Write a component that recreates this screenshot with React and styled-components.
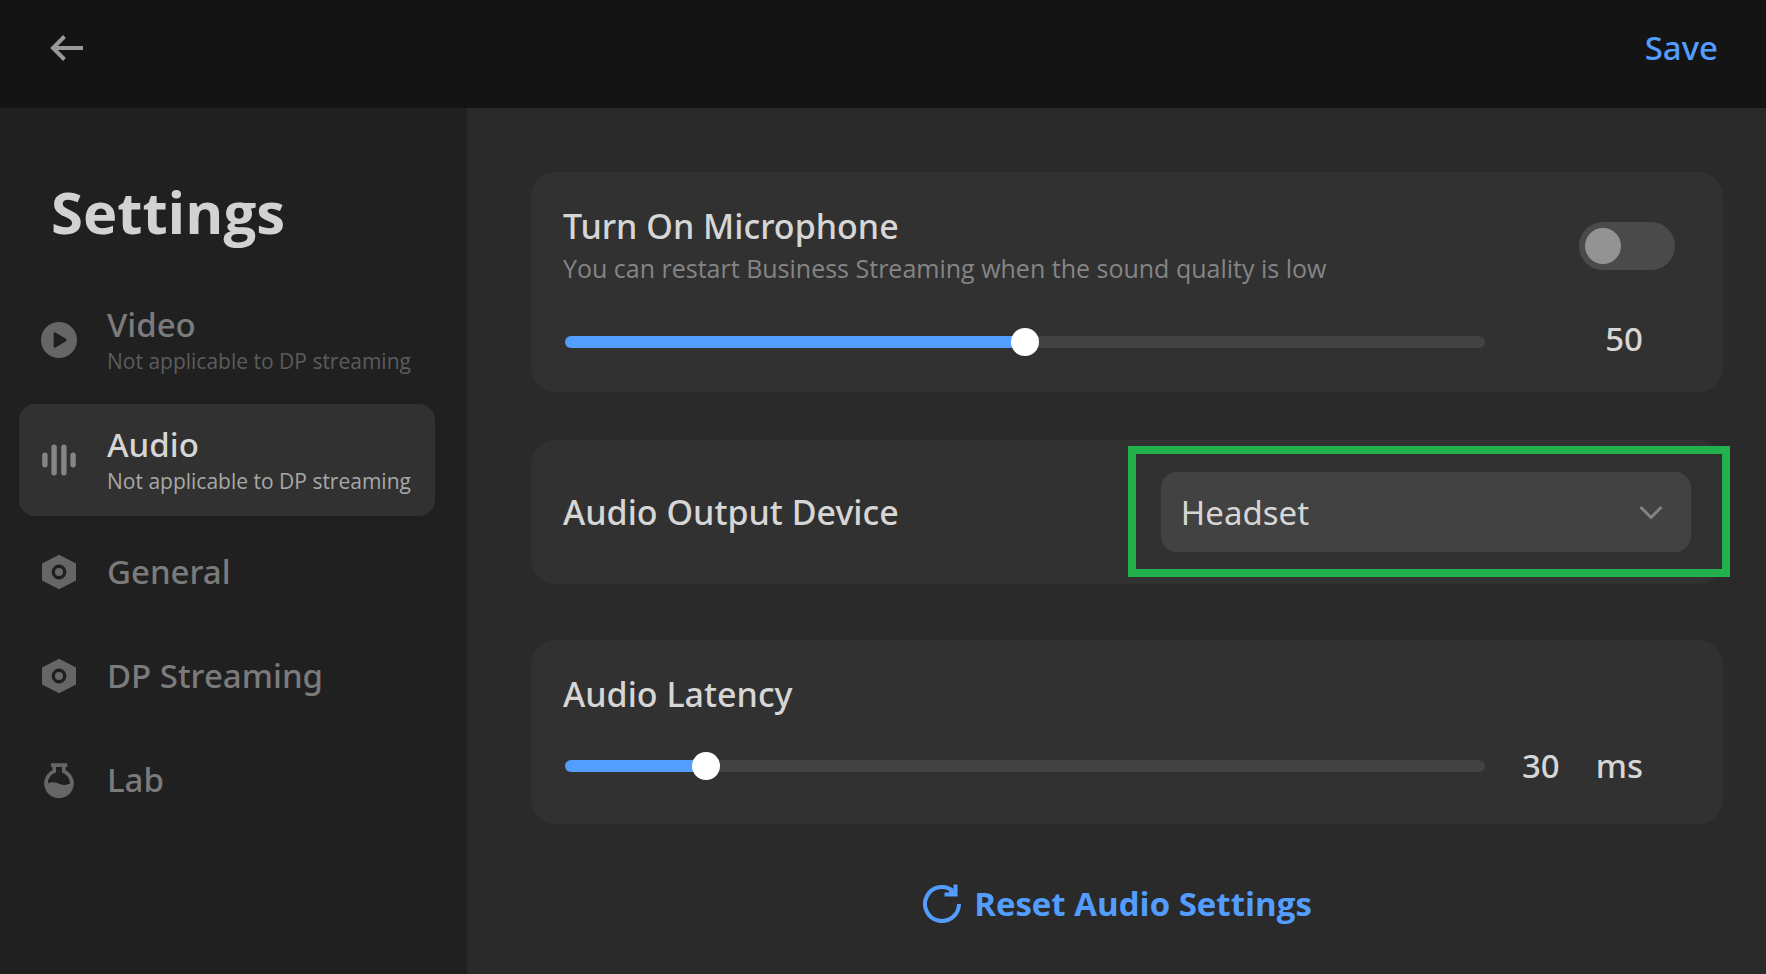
import {useState} from "react";
import styled, {createGlobalStyle} from "styled-components";

const GlobalStyle = createGlobalStyle`
  * {
    box-sizing: border-box;
  }

  body {
    margin: 0;
    background: #2a2a2a;
    color: #d6d6d6;
    font-family: "Noto Sans", "Open Sans", sans-serif;
    font-size: 33px;
    font-weight: 400;
  }

  button, input, select {
    margin: 0;
    font: inherit;
    color: inherit;
  }

  h1, h2, p {
    margin: 0;
  }
`;

const StyledApp = styled.div`
  min-height: 100vh;
  display: flex;
  flex-direction: column;
`;

const TopBar = styled.header`
  height: 108px;
  padding: 0 48px 12px;
  display: flex;
  align-items: center;
  justify-content: space-between;
  background: #141414;
`;

const TextButton = styled.button`
  display: flex;
  align-items: center;
  gap: 12px;
  padding: 0;
  border: 0;
  background: none;
  color: #539dff;
  font-weight: 500;
  line-height: 40px;
  cursor: pointer;
`;

const BackButton = styled(TextButton)`
  color: #999999;
`;

const ResetButton = styled(TextButton)`
  font-family: "Open Sans", "Noto Sans", sans-serif;
  font-weight: 700;
`;

const Body = styled.div`
  flex: 1;
  display: flex;
`;

const Sidebar = styled.aside`
  width: 467px;
  flex-shrink: 0;
  padding: 64px 32px 32px 19px;
  background: #202020;
`;

const Heading = styled.h1`
  padding-left: 32px;
  margin-bottom: 32px;
  color: #d2d2d2;
  font-family: "Open Sans", "Noto Sans", sans-serif;
  font-size: 58px;
  font-weight: 700;
  line-height: 80px;
`;

const Menu = styled.nav`
  display: flex;
  flex-direction: column;
  gap: 8px;
`;

const MenuItem = styled.button`
  height: ${props => props.$tall ? 112 : 96}px;
  padding: 0 20px;
  display: flex;
  align-items: center;
  gap: 28px;
  border: 0;
  border-radius: 16px;
  text-align: left;
  cursor: pointer;
  background: ${props => props.$active ? "#313131" : "transparent"};
  color: ${props => props.$active ? "#d6d6d6" : "#7b7b7b"};

  & svg {
    flex-shrink: 0;
    color: ${props => props.$active ? "#858585" : "#666666"};
  }
`;

const MenuText = styled.span`
  display: flex;
  flex-direction: column;
  gap: 2px;
  font-weight: 500;
  line-height: 40px;
  white-space: nowrap;
`;

const MenuNote = styled.span`
  color: ${props => props.$active ? "#a8a8a8" : "#5c5c5c"};
  font-family: "Open Sans", "Noto Sans", sans-serif;
  font-size: 21px;
  font-weight: 400;
  line-height: 28px;
`;

const Main = styled.main`
  flex: 1;
  min-width: 0;
  padding: 64px 43px 32px 64px;
  display: flex;
  flex-direction: column;
`;

const Card = styled.section`
  padding: 32px;
  border-radius: 24px;
  background: #313131;
`;

const MicCard = styled(Card)`
  padding-top: 34px;
  margin-bottom: 48px;
`;

const DeviceCard = styled(Card)`
  margin-bottom: 56px;
  display: flex;
  align-items: center;
  justify-content: space-between;
`;

const LatencyCard = styled(Card)`
  padding-top: 34px;
  padding-bottom: 40px;
`;

const CardTop = styled.div`
  display: flex;
  align-items: center;
  justify-content: space-between;
  padding-right: 16px;
  margin-bottom: 38px;
`;

const CardTitle = styled.h2`
  font-size: 34px;
  font-weight: 500;
  line-height: 40px;
`;

const CardNote = styled.p`
  margin-top: 4px;
  color: #858585;
  font-family: "Open Sans", "Noto Sans", sans-serif;
  font-size: 25px;
  line-height: 36px;
`;

const Switch = styled.input`
  appearance: none;
  width: 96px;
  height: 48px;
  padding: 6px;
  flex-shrink: 0;
  display: flex;
  justify-content: ${props => props.checked ? "flex-end" : "flex-start"};
  border-radius: 24px;
  background: ${props => props.checked ? "#539dff" : "#4a4a4a"};
  cursor: pointer;

  &::before {
    content: "";
    width: 36px;
    height: 36px;
    border-radius: 50%;
    background: ${props => props.checked ? "#ffffff" : "#939393"};
  }
`;

const SliderRow = styled.div`
  height: 36px;
  padding: 0 48px 0 2px;
  display: flex;
  align-items: center;
`;

const LatencyRow = styled(SliderRow)`
  margin-top: 34px;
`;

const StyledSlider = styled.input`
  --stop: calc(14px + (100% - 28px) * var(--ratio));
  appearance: none;
  flex: 1;
  min-width: 0;
  height: 28px;
  background: transparent;
  cursor: pointer;

  &::-webkit-slider-runnable-track {
    height: 12px;
    border-radius: 6px;
    background: linear-gradient(to right, #539dff var(--stop), #424242 var(--stop));
  }

  &::-webkit-slider-thumb {
    appearance: none;
    width: 28px;
    height: 28px;
    margin-top: -8px;
    border-radius: 50%;
    background: #ffffff;
  }
`;

const SliderValue = styled.output`
  width: 158px;
  display: flex;
  justify-content: flex-end;
  gap: 36px;
  padding-bottom: ${props => props.$raised ? 6 : 0}px;
  font-weight: 500;
  line-height: 36px;
`;

const SelectField = styled.div`
  position: relative;
  width: 47%;

  & svg {
    position: absolute;
    top: 28px;
    right: 28px;
    pointer-events: none;
    color: #828282;
  }
`;

const StyledSelect = styled.select`
  appearance: none;
  display: block;
  width: 100%;
  height: 80px;
  padding: 0 64px 0 20px;
  border: 0;
  border-radius: 16px;
  background: #424242;
  cursor: pointer;
`;

// frame drawn over the card, its right side goes past the card edge
const Highlight = styled.div`
  position: absolute;
  inset: -26px -39px -25px -33px;
  border: 8px solid #22b14c;
  pointer-events: none;
`;

const Footer = styled.footer`
  padding: 60px 20px 0 0;
  display: flex;
  justify-content: center;
`;

const BackIcon = () => (
    <svg width="36" height="36" viewBox="0 0 36 36" fill="none" stroke="currentColor" strokeWidth="4">
        <path d="M35 18H6M16.5 6.5L5 18L16.5 29.5"/>
    </svg>
);

const VideoIcon = () => (
    <svg width="40" height="40" viewBox="0 0 40 40" fill="currentColor">
        <path fillRule="evenodd" d="M20 2a18 18 0 1 0 0 36a18 18 0 1 0 0-36zM16.5 12.4L27 18.8Q28.6 20 27 21.2L16.5 27.6Q14.6 28.4 14.6 26.4V13.6Q14.6 11.6 16.5 12.4z"/>
    </svg>
);

const AudioIcon = () => (
    <svg width="40" height="40" viewBox="0 0 40 40" fill="currentColor">
        <rect x="3.2" y="12.6" width="5.4" height="14.8" rx="2.7"/>
        <rect x="12.4" y="4.6" width="5.4" height="30.8" rx="2.7"/>
        <rect x="22.2" y="4.6" width="5.4" height="30.8" rx="2.7"/>
        <rect x="31.4" y="12.6" width="5.4" height="14.8" rx="2.7"/>
    </svg>
);

const NutIcon = () => (
    <svg width="40" height="40" viewBox="0 0 40 40" fill="currentColor">
        <path fillRule="evenodd" d="M20 2.8L37 11.4V28.6L20 37.2L3 28.6V11.4zM20 12.6a7.4 7.4 0 1 0 0 14.8a7.4 7.4 0 1 0 0-14.8z"/>
        <circle cx="20" cy="20" r="4"/>
    </svg>
);

const LabIcon = () => (
    <svg width="40" height="40" viewBox="0 0 40 40" fill="currentColor">
        <path fillRule="evenodd" d="M12 3.2H28.2V7H26.6V10.2A14.8 14.8 0 1 1 13.4 10.2V7H12zM17 7V12.4A11.6 11.6 0 0 0 8.9 23.2C14 21.4 17.2 22.6 20.4 23.9C24 25.3 28 25.2 31 23.6A11.6 11.6 0 0 0 23 12.4V7z"/>
    </svg>
);

const ChevronIcon = () => (
    <svg width="24" height="24" viewBox="0 0 24 24" fill="none" stroke="currentColor" strokeWidth="3">
        <path d="M1.5 7L12 17.5L22.5 7"/>
    </svg>
);

const ResetIcon = () => (
    <svg width="40" height="40" viewBox="0 0 40 40" fill="none" stroke="currentColor" strokeWidth="4">
        <path d="M37 20A17 17 0 1 1 31 7"/>
        <path d="M33.5 0.5V10.5H22.5"/>
        <path d="M28 5L33.5 10.5H26" fill="currentColor" strokeWidth="2"/>
    </svg>
);

const menu = [
    {name: "Video", icon: VideoIcon, note: "Not applicable to DP streaming"},
    {name: "Audio", icon: AudioIcon, note: "Not applicable to DP streaming"},
    {name: "General", icon: NutIcon},
    {name: "DP Streaming", icon: NutIcon},
    {name: "Lab", icon: LabIcon},
];

const Slider = ({value, max, onChange, label}) => {
    return <StyledSlider
        type="range"
        min={0}
        max={max}
        value={value}
        aria-label={label}
        style={{"--ratio": value / max}}
        onChange={(e) => onChange(+e.target.value)}
    />
};

function App() {
  const [page, setPage] = useState("Audio");
  const [micOn, setMicOn] = useState(false);
  const [volume, setVolume] = useState(50);
  const [device, setDevice] = useState("Headset");
  const [latency, setLatency] = useState(30);

  const reset = () => {
      setMicOn(false);
      setVolume(50);
      setDevice("Headset");
      setLatency(30);
  };

  return (
      <StyledApp>
        <GlobalStyle/>
        <TopBar>
            <BackButton aria-label="Back"><BackIcon/></BackButton>
            <TextButton>Save</TextButton>
        </TopBar>
        <Body>
            <Sidebar>
                <Heading>Settings</Heading>
                <Menu>
                    {
                        menu.map(({name, icon: Icon, note}) => {
                            const active = name === page;
                            return <MenuItem key={name} $active={active} $tall={!!note} onClick={() => setPage(name)}>
                                <Icon/>
                                <MenuText>
                                    {name}
                                    {note && <MenuNote $active={active}>{note}</MenuNote>}
                                </MenuText>
                            </MenuItem>
                        })
                    }
                </Menu>
            </Sidebar>
            <Main>
                <MicCard>
                    <CardTop>
                        <div>
                            <CardTitle><label htmlFor="mic">Turn On Microphone</label></CardTitle>
                            <CardNote>You can restart Business Streaming when the sound quality is low</CardNote>
                        </div>
                        <Switch id="mic" type="checkbox" role="switch" checked={micOn}
                                onChange={(e) => setMicOn(e.target.checked)}/>
                    </CardTop>
                    <SliderRow>
                        <Slider label="Microphone volume" value={volume} max={100} onChange={setVolume}/>
                        <SliderValue $raised>{volume}</SliderValue>
                    </SliderRow>
                </MicCard>
                <DeviceCard>
                    <CardTitle><label htmlFor="device">Audio Output Device</label></CardTitle>
                    <SelectField>
                        <StyledSelect id="device" value={device} onChange={(e) => setDevice(e.target.value)}>
                            <option>Headset</option>
                            <option>PC</option>
                        </StyledSelect>
                        <ChevronIcon/>
                        <Highlight/>
                    </SelectField>
                </DeviceCard>
                <LatencyCard>
                    <CardTitle>Audio Latency</CardTitle>
                    <LatencyRow>
                        <Slider label="Audio Latency" value={latency} max={210} onChange={setLatency}/>
                        <SliderValue><span>{latency}</span><span>ms</span></SliderValue>
                    </LatencyRow>
                </LatencyCard>
                <Footer>
                    <ResetButton onClick={reset}><ResetIcon/>Reset Audio Settings</ResetButton>
                </Footer>
            </Main>
        </Body>
      </StyledApp>
  );
}

export default App;
